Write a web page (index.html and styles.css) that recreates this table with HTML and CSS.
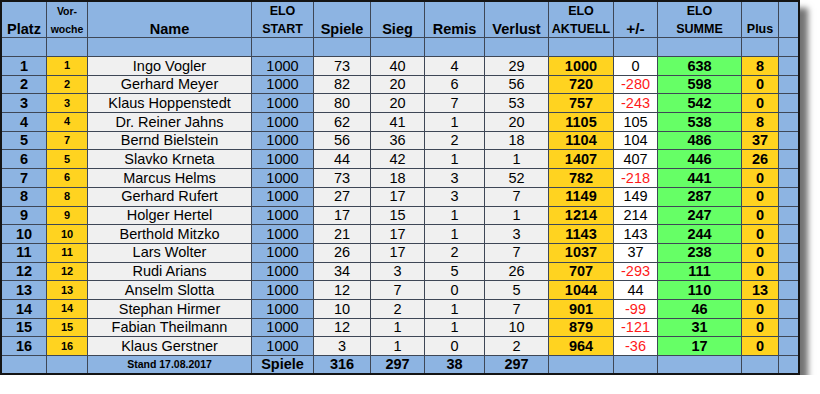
FILE: index.html
```html
<!DOCTYPE html>
<html lang="de">
<head>
<meta charset="utf-8">
<title>ELO Rangliste</title>
<link rel="stylesheet" href="styles.css">
</head>
<body>
<table class="elo">
<colgroup>
<col class="c-platz"><col class="c-vor"><col class="c-name"><col class="c-start"><col class="c-spiele"><col class="c-sieg"><col class="c-remis"><col class="c-verlust"><col class="c-akt"><col class="c-diff"><col class="c-summe"><col class="c-plus"><col class="c-end">
</colgroup>
<thead>
<tr class="h1">
<th></th><th class="small">Vor-</th><th></th><th class="mid">ELO</th><th></th><th></th><th></th><th></th><th class="mid">ELO</th><th></th><th class="mid">ELO</th><th></th><th class="last"></th>
</tr>
<tr class="h2">
<th>Platz</th><th class="small">woche</th><th>Name</th><th class="mid">START</th><th>Spiele</th><th>Sieg</th><th>Remis</th><th>Verlust</th><th class="mid">AKTUELL</th><th class="pm">+/-</th><th class="mid">SUMME</th><th class="mid">Plus</th><th class="last"></th>
</tr>
<tr class="blank">
<th></th><th></th><th></th><th></th><th></th><th></th><th></th><th></th><th></th><th></th><th></th><th></th><th class="last"></th>
</tr>
</thead>
<tbody>
<tr><td class="platz">1</td><td class="vor">1</td><td class="name">Ingo Vogler</td><td class="start">1000</td><td class="g">73</td><td class="g">40</td><td class="g">4</td><td class="g">29</td><td class="akt">1000</td><td class="diff">0</td><td class="sum">638</td><td class="plus">8</td><td class="end"></td></tr>
<tr><td class="platz">2</td><td class="vor">2</td><td class="name">Gerhard Meyer</td><td class="start">1000</td><td class="g">82</td><td class="g">20</td><td class="g">6</td><td class="g">56</td><td class="akt">720</td><td class="diff neg">-280</td><td class="sum">598</td><td class="plus">0</td><td class="end"></td></tr>
<tr><td class="platz">3</td><td class="vor">3</td><td class="name">Klaus Hoppenstedt</td><td class="start">1000</td><td class="g">80</td><td class="g">20</td><td class="g">7</td><td class="g">53</td><td class="akt">757</td><td class="diff neg">-243</td><td class="sum">542</td><td class="plus">0</td><td class="end"></td></tr>
<tr><td class="platz">4</td><td class="vor">4</td><td class="name">Dr. Reiner Jahns</td><td class="start">1000</td><td class="g">62</td><td class="g">41</td><td class="g">1</td><td class="g">20</td><td class="akt">1105</td><td class="diff">105</td><td class="sum">538</td><td class="plus">8</td><td class="end"></td></tr>
<tr><td class="platz">5</td><td class="vor">7</td><td class="name">Bernd Bielstein</td><td class="start">1000</td><td class="g">56</td><td class="g">36</td><td class="g">2</td><td class="g">18</td><td class="akt">1104</td><td class="diff">104</td><td class="sum">486</td><td class="plus">37</td><td class="end"></td></tr>
<tr><td class="platz">6</td><td class="vor">5</td><td class="name">Slavko Krneta</td><td class="start">1000</td><td class="g">44</td><td class="g">42</td><td class="g">1</td><td class="g">1</td><td class="akt">1407</td><td class="diff">407</td><td class="sum">446</td><td class="plus">26</td><td class="end"></td></tr>
<tr><td class="platz">7</td><td class="vor">6</td><td class="name">Marcus Helms</td><td class="start">1000</td><td class="g">73</td><td class="g">18</td><td class="g">3</td><td class="g">52</td><td class="akt">782</td><td class="diff neg">-218</td><td class="sum">441</td><td class="plus">0</td><td class="end"></td></tr>
<tr><td class="platz">8</td><td class="vor">8</td><td class="name">Gerhard Rufert</td><td class="start">1000</td><td class="g">27</td><td class="g">17</td><td class="g">3</td><td class="g">7</td><td class="akt">1149</td><td class="diff">149</td><td class="sum">287</td><td class="plus">0</td><td class="end"></td></tr>
<tr><td class="platz">9</td><td class="vor">9</td><td class="name">Holger Hertel</td><td class="start">1000</td><td class="g">17</td><td class="g">15</td><td class="g">1</td><td class="g">1</td><td class="akt">1214</td><td class="diff">214</td><td class="sum">247</td><td class="plus">0</td><td class="end"></td></tr>
<tr><td class="platz">10</td><td class="vor">10</td><td class="name">Berthold Mitzko</td><td class="start">1000</td><td class="g">21</td><td class="g">17</td><td class="g">1</td><td class="g">3</td><td class="akt">1143</td><td class="diff">143</td><td class="sum">244</td><td class="plus">0</td><td class="end"></td></tr>
<tr><td class="platz">11</td><td class="vor">11</td><td class="name">Lars Wolter</td><td class="start">1000</td><td class="g">26</td><td class="g">17</td><td class="g">2</td><td class="g">7</td><td class="akt">1037</td><td class="diff">37</td><td class="sum">238</td><td class="plus">0</td><td class="end"></td></tr>
<tr><td class="platz">12</td><td class="vor">12</td><td class="name">Rudi Arians</td><td class="start">1000</td><td class="g">34</td><td class="g">3</td><td class="g">5</td><td class="g">26</td><td class="akt">707</td><td class="diff neg">-293</td><td class="sum">111</td><td class="plus">0</td><td class="end"></td></tr>
<tr><td class="platz">13</td><td class="vor">13</td><td class="name">Anselm Slotta</td><td class="start">1000</td><td class="g">12</td><td class="g">7</td><td class="g">0</td><td class="g">5</td><td class="akt">1044</td><td class="diff">44</td><td class="sum">110</td><td class="plus">13</td><td class="end"></td></tr>
<tr><td class="platz">14</td><td class="vor">14</td><td class="name">Stephan Hirmer</td><td class="start">1000</td><td class="g">10</td><td class="g">2</td><td class="g">1</td><td class="g">7</td><td class="akt">901</td><td class="diff neg">-99</td><td class="sum">46</td><td class="plus">0</td><td class="end"></td></tr>
<tr><td class="platz">15</td><td class="vor">15</td><td class="name">Fabian Theilmann</td><td class="start">1000</td><td class="g">12</td><td class="g">1</td><td class="g">1</td><td class="g">10</td><td class="akt">879</td><td class="diff neg">-121</td><td class="sum">31</td><td class="plus">0</td><td class="end"></td></tr>
<tr><td class="platz">16</td><td class="vor">16</td><td class="name">Klaus Gerstner</td><td class="start">1000</td><td class="g">3</td><td class="g">1</td><td class="g">0</td><td class="g">2</td><td class="akt">964</td><td class="diff neg">-36</td><td class="sum">17</td><td class="plus">0</td><td class="end"></td></tr>
</tbody>
<tfoot>
<tr>
<td></td><td></td><td class="stand">Stand 17.08.2017</td><td class="fb">Spiele</td><td class="fb">316</td><td class="fb">297</td><td class="fb">38</td><td class="fb">297</td><td></td><td></td><td></td><td></td><td class="last"></td>
</tr>
</tfoot>
</table>
</body>
</html>
```
FILE: styles.css
```css
html, body {
  margin: 0;
  padding: 0;
  background: #ffffff;
}

.elo {
  table-layout: fixed;
  border-collapse: separate;
  border-spacing: 0;
  width: 800px;
  border: 2px solid #141414;
  font-family: "Liberation Sans", Arial, sans-serif;
  font-size: 14.5px;
  color: #000;
  box-shadow: 8px 8px 6px rgba(0, 0, 0, 0.55);
}

.c-platz { width: 45px; }
.c-vor { width: 41px; }
.c-name { width: 164px; }
.c-start { width: 62px; }
.c-spiele { width: 57px; }
.c-sieg { width: 54px; }
.c-remis { width: 60px; }
.c-verlust { width: 64px; }
.c-akt { width: 65px; }
.c-diff { width: 44px; }
.c-summe { width: 84px; }
.c-plus { width: 37px; }
.c-end { width: 19px; }

.elo th,
.elo td {
  padding: 0;
  text-align: center;
  vertical-align: middle;
  line-height: 1;
  border-right: 1px solid #3e4756;
  border-bottom: 1px solid #3e4756;
  white-space: nowrap;
  overflow: hidden;
}

.elo th:last-child,
.elo td:last-child {
  border-right: none;
}

.elo th {
  background: #8db4e2;
  font-weight: bold;
}

.elo tr.h1 { height: 18px; }
.elo tr.h1 th { border-bottom: none; padding-top: 1px; }
.elo tr.h2 { height: 18px; }
.elo tr.h2 th { padding-top: 2px; }
.elo tr.h2 th.pm { padding-top: 1px; }
.elo tr.blank { height: 19px; }
.elo tbody tr { height: 18.6875px; }
.elo tfoot tr { height: 17px; }
.elo tfoot td { border-bottom: none; background: #8db4e2; }

.elo th.small { font-size: 10.5px; }
.elo th.mid { font-size: 12.5px; }
.elo th.pm { font-size: 15.5px; }

.platz { background: #8db4e2; font-weight: bold; }
.vor { background: #ffd320; font-weight: bold; font-size: 11px; }
.name { background: #f0f0f0; }
.start { background: #8db4e2; }
.g { background: #f0f0f0; }
.akt { background: #ffd320; font-weight: bold; }
.diff { background: #ffffff; }
.diff.neg { color: #ff1a1a; }
.sum { background: #66ff66; font-weight: bold; }
.plus { background: #ffd320; font-weight: bold; }
.end { background: #8db4e2; }

.stand { font-weight: bold; font-size: 10.5px; }
.fb { font-weight: bold; }
```
